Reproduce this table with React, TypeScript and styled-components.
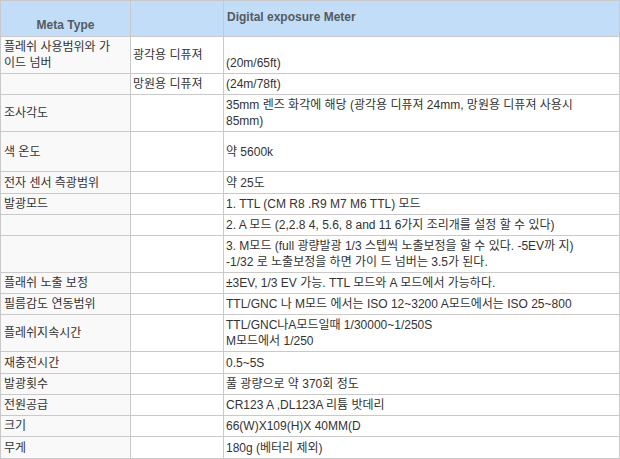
import { Fragment } from "react";
import styled, { createGlobalStyle } from "styled-components";

const GlobalStyle = createGlobalStyle`
    body {
        margin: 0;
        background: #ffffff;
        font-family: "Liberation Sans", "Noto Sans CJK KR", sans-serif;
        font-size: 12px;
        color: #333;
    }
`;

interface Row {
    label?: string;
    sub?: string;
    value: string[];
    height?: number;
}

const rows: Row[] = [
    { label: "플레쉬 사용범위와 가이드 넘버", sub: "광각용 디퓨져", value: ["", "(20m/65ft)"] },
    { sub: "망원용 디퓨져", value: ["(24m/78ft)"] },
    { label: "조사각도", value: ["35mm 렌즈 화각에 해당 (광각용 디퓨져 24mm, 망원용 디퓨져 사용시", "85mm)"] },
    { label: "색 온도", value: ["약 5600k"], height: 40 },
    { label: "전자 센서 측광범위", value: ["약 25도"], height: 22 },
    { label: "발광모드", value: ["1. TTL (CM R8 .R9 M7 M6 TTL) 모드"] },
    { value: ["2. A 모드 (2,2.8 4, 5.6, 8 and 11 6가지 조리개를 설정 할 수 있다)"] },
    { value: ["3. M모드 (full 광량발광 1/3 스텝씩 노출보정을 할 수 있다. -5EV까 지)", "-1/32 로 노출보정을 하면 가이 드 넘버는 3.5가 된다."] },
    { label: "플래쉬 노출 보정", value: ["±3EV, 1/3 EV 가능. TTL 모드와 A 모드에서 가능하다."] },
    { label: "필름감도 연동범위", value: ["TTL/GNC 나 M모드 에서는 ISO 12~3200 A모드에서는 ISO 25~800"] },
    { label: "플레쉬지속시간", value: ["TTL/GNC나A모드일때 1/30000~1/250S", "M모드에서 1/250"] },
    { label: "재충전시간", value: ["0.5~5S"], height: 22 },
    { label: "발광횟수", value: ["풀 광량으로 약 370회 정도"] },
    { label: "전원공급", value: ["CR123 A ,DL123A 리튬 밧데리"] },
    { label: "크기", value: ["66(W)X109(H)X 40MM(D"] },
    { label: "무게", value: ["180g (베터리 제외)"], height: 22 },
];

function App() {
    return (
        <>
            <GlobalStyle />
            <SpecTable>
                <colgroup>
                    <col style={{ width: 130 }} />
                    <col style={{ width: 93 }} />
                    <col />
                </colgroup>
                <thead>
                    <tr>
                        <HeadCell $align="center" $valign="bottom" $pad="0 0 3px 0">Meta Type</HeadCell>
                        <HeadCell />
                        <HeadCell $align="left" $valign="top" $pad="8px 3px 0 3px">Digital exposure Meter</HeadCell>
                    </tr>
                </thead>
                <tbody>
                    {rows.map((row, i) => (
                        <tr key={i}>
                            <LabelCell $h={row.height}>{row.label}</LabelCell>
                            <Cell>{row.sub}</Cell>
                            <Cell>
                                {row.value.map((line, j) => (
                                    <Fragment key={j}>
                                        {j > 0 && <br />}
                                        {line}
                                    </Fragment>
                                ))}
                            </Cell>
                        </tr>
                    ))}
                </tbody>
            </SpecTable>
        </>
    );
}

export default App;

const SpecTable = styled.table`
    width: 620px;
    table-layout: fixed;
    border-collapse: collapse;
    border: 1px solid #c9c9c9;
`;

const HeadCell = styled.th<{ $align?: string; $valign?: string; $pad?: string }>`
    height: 36px;
    box-sizing: border-box;
    padding: ${(p) => p.$pad || "0"};
    background: #c1ddf8;
    border: 1px solid #c9c9c9;
    color: #555a60;
    font-weight: bold;
    font-size: 12px;
    line-height: 16px;
    text-align: ${(p) => p.$align || "left"};
    vertical-align: ${(p) => p.$valign || "middle"};
`;

const Cell = styled.td`
    padding: 2px 2px 2px 2px;
    border: 1px solid #c9c9c9;
    line-height: 16px;
    vertical-align: middle;
    white-space: nowrap;
    background: #ffffff;
`;

const LabelCell = styled.td<{ $h?: number }>`
    padding: 2px 14px 2px 3px;
    height: ${(p) => (p.$h ? `${p.$h}px` : "auto")};
    box-sizing: border-box;
    border: 1px solid #c9c9c9;
    line-height: 16px;
    vertical-align: middle;
    background: #f9f9f9;
`;
